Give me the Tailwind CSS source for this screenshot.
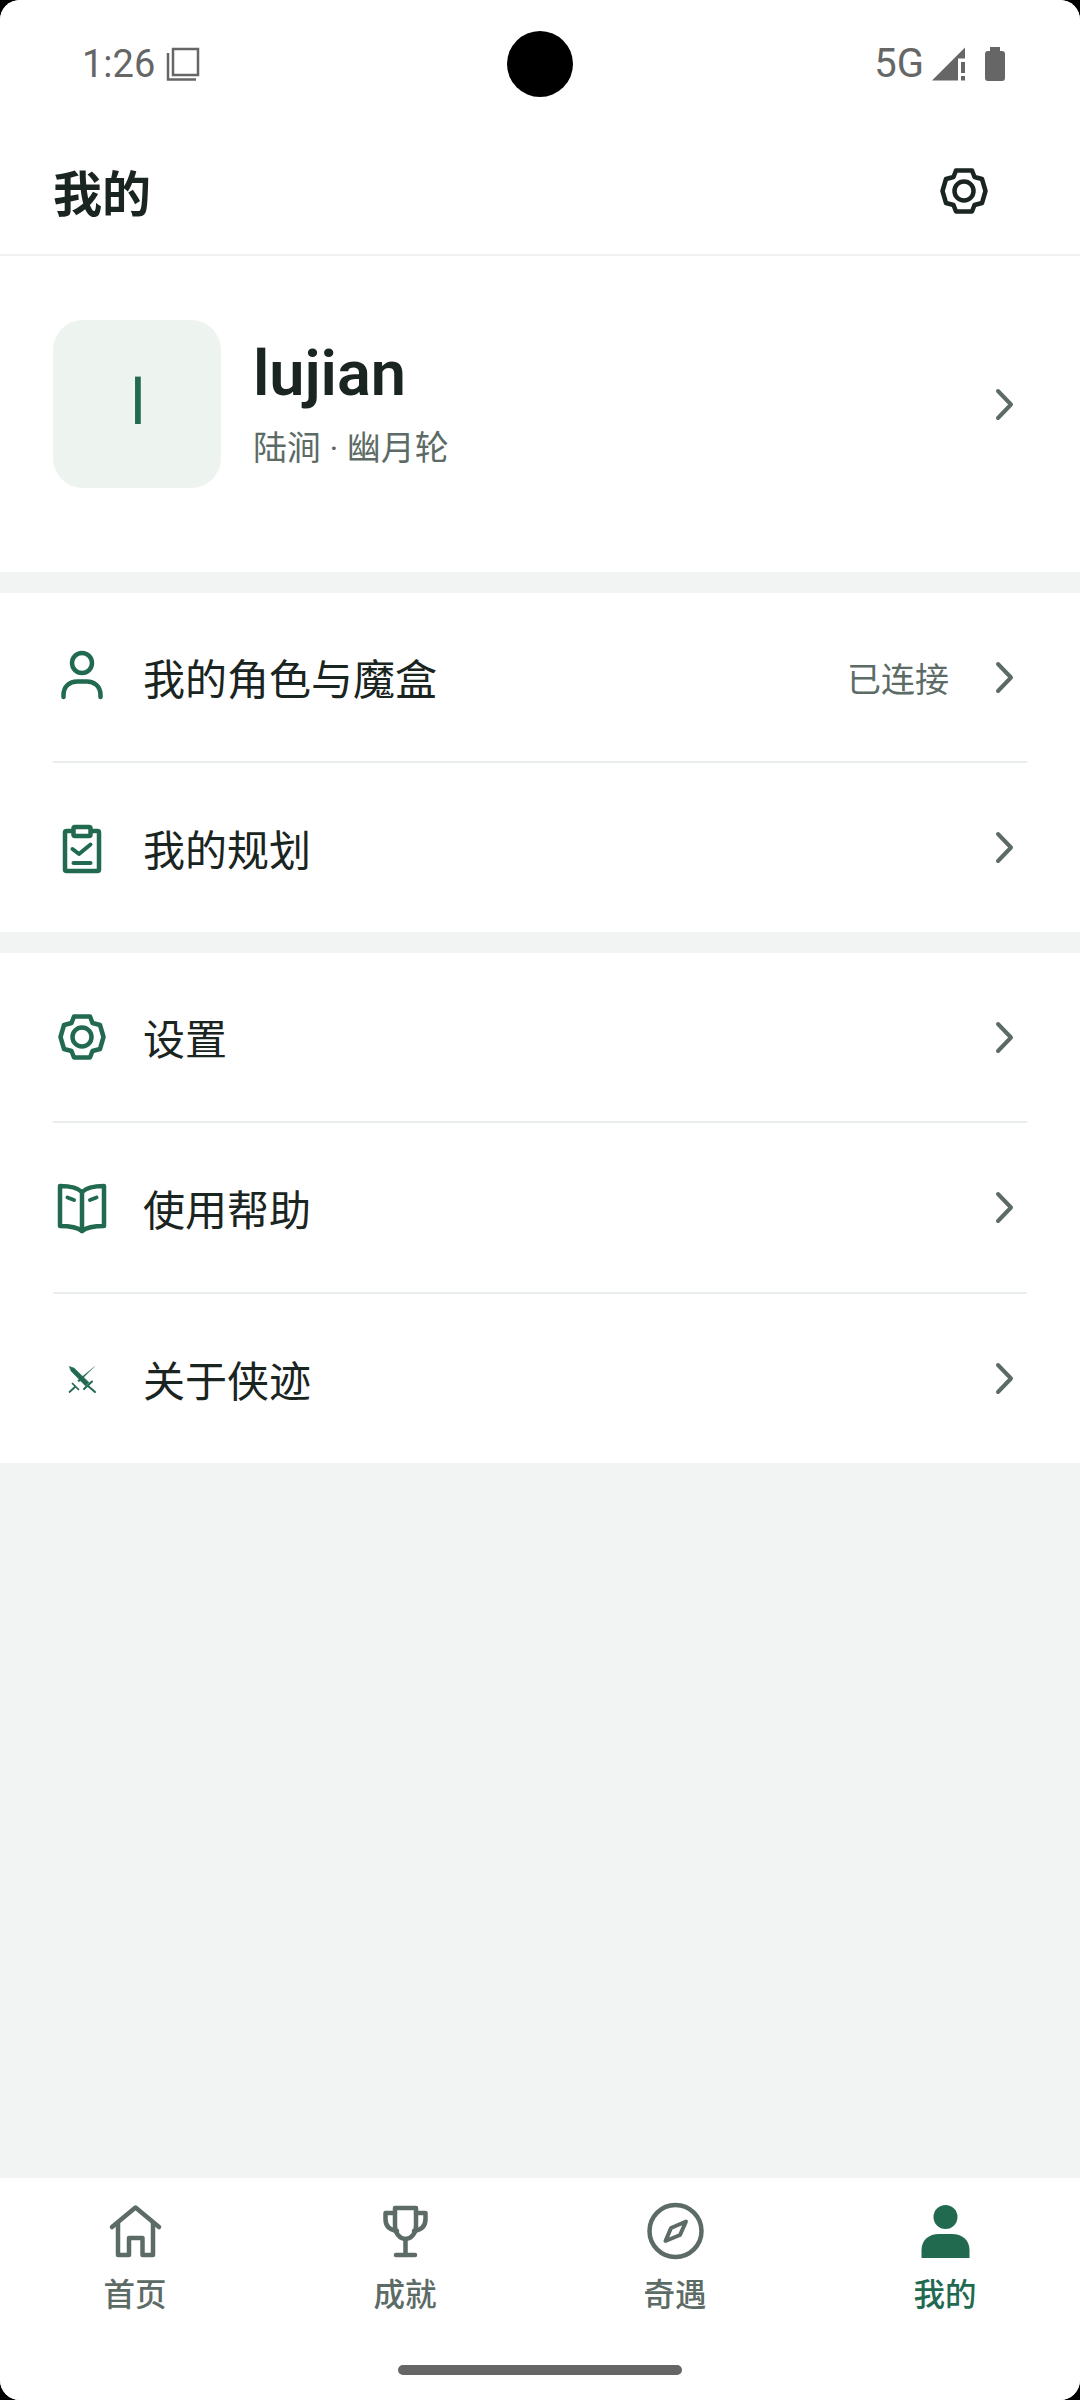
<!DOCTYPE html>
<html lang="zh-CN">
<head>
    <meta charset="UTF-8">
    <meta name="viewport" content="width=device-width, initial-scale=1.0">
    <title>我的</title>
    <script src="https://cdn.jsdelivr.net/npm/@tailwindcss/browser@4"></script>
</head>
<body class="bg-black">
<div class="w-[1080px] h-[2400px] bg-[#f2f4f3] rounded-[20px] overflow-hidden flex flex-col relative font-[Roboto,'Noto_Sans_CJK_SC',sans-serif] text-[#1a2421]">

    <!-- status bar -->
    <div class="h-[128px] bg-white flex items-center justify-between pl-[82px] pr-[75px] text-[#666666] shrink-0">
        <div class="flex items-center gap-[11px]">
            <span class="text-[38px] leading-none">1:26</span>
            <svg class="w-[34px] h-[34px]" viewBox="0 0 34 34" fill="none" stroke="#666666" stroke-width="2.5">
                <rect x="7" y="2" width="25" height="26"/>
                <path d="M2 6V32.5H30"/>
            </svg>
        </div>
        <div class="flex items-center">
            <span class="text-[40px] leading-none">5G</span>
            <svg class="w-[34px] h-[34px] ml-[8px]" viewBox="0 0 34 34" fill="#666666">
                <path d="M0 33.5L33 .5V11.5H26V33.5Z"/>
                <rect x="29" y="15" width="4" height="11"/>
                <rect x="29" y="29" width="4" height="4.5"/>
            </svg>
            <svg class="w-[20px] h-[34px] ml-[19px]" viewBox="0 0 20 34" fill="#666666">
                <path d="M5 0H15V4H17A3 3 0 0 1 20 7V31A3 3 0 0 1 17 34H3A3 3 0 0 1 0 31V7A3 3 0 0 1 3 4H5Z"/>
            </svg>
        </div>
    </div>
    <div class="absolute left-[507px] top-[31px] w-[66px] h-[66px] rounded-full bg-black"></div>

    <!-- header -->
    <div class="h-[128px] bg-white border-b-2 border-[#f0f2f1] flex items-center justify-between pl-[53px] pr-[53px] shrink-0">
        <h1 class="text-[49px] font-bold leading-none pt-[8px]">我的</h1>
        <div class="w-[126px] h-[126px] flex items-center justify-center">
            <svg class="w-[58px] h-[58px]" viewBox="0 0 58 58" fill="none" stroke="#1a2421" stroke-width="4.5" stroke-linejoin="round">
                <path d="M21 8.5H37L39.5 15L47 17L50.5 29L47 41L39.5 43L37 49.5H21L18.5 43L11 41L7.5 29L11 17L18.5 15Z"/>
                <circle cx="29" cy="29" r="9.5"/>
            </svg>
        </div>
    </div>

    <!-- profile -->
    <div class="bg-white flex items-center pl-[53px] pr-[53px] pt-[64px] pb-[84px] shrink-0">
        <div class="w-[168px] h-[168px] rounded-[30px] bg-[#edf3ef] flex items-center justify-center text-[63px] leading-none text-[#216a4f] shrink-0 pb-[3px] pl-[2px]">l</div>
        <div class="ml-[32px] flex-1">
            <div class="text-[63px] font-semibold leading-[74px]">lujian</div>
            <div class="text-[34px] leading-[48px] text-[#5c6b66] mt-[13px]">陆涧 · 幽月轮</div>
        </div>
        <svg class="w-[39px] h-[39px]" viewBox="0 0 39 39" fill="none" stroke="#5c6b66" stroke-width="4" stroke-linecap="round" stroke-linejoin="round">
            <path d="M10 6L23 19.5L10 33"/>
        </svg>
    </div>

    <!-- group 1 -->
    <div class="bg-white mt-[21px] px-[53px] shrink-0">
        <div class="h-[168px] flex items-center">
            <svg class="w-[58px] h-[58px] shrink-0" viewBox="0 0 58 58" fill="none" stroke="#216a4f" stroke-width="4.5" stroke-linecap="round">
                <circle cx="29" cy="15" r="10"/>
                <path d="M10.5 49V47C10.5 38 17 33.5 24 33.5H34C41 33.5 47.5 38 47.5 47V49"/>
            </svg>
            <span class="ml-[32px] text-[42px] leading-none flex-1 pt-[8px]">我的角色与魔盒</span>
            <span class="text-[34px] leading-none text-[#5c6b66] mr-[39px] pt-[6px]">已连接</span>
            <svg class="w-[39px] h-[39px]" viewBox="0 0 39 39" fill="none" stroke="#5c6b66" stroke-width="4" stroke-linecap="round" stroke-linejoin="round">
                <path d="M10 6L23 19.5L10 33"/>
            </svg>
        </div>
        <div class="h-[2px] bg-[#e9edeb]"></div>
        <div class="h-[169px] flex items-center">
            <svg class="w-[58px] h-[58px] shrink-0" viewBox="0 0 58 58" fill="none" stroke="#216a4f" stroke-width="4.5" stroke-linecap="round" stroke-linejoin="round">
                <rect x="12" y="12" width="34" height="40" rx="1.5"/>
                <rect x="20.5" y="8" width="17" height="9" rx="1.5" fill="#ffffff"/>
                <path d="M19.5 30L26 35L37.5 25.5" stroke-width="4"/>
                <path d="M20.5 44H37.5" stroke-width="4"/>
            </svg>
            <span class="ml-[32px] text-[42px] leading-none flex-1 pt-[8px]">我的规划</span>
            <svg class="w-[39px] h-[39px]" viewBox="0 0 39 39" fill="none" stroke="#5c6b66" stroke-width="4" stroke-linecap="round" stroke-linejoin="round">
                <path d="M10 6L23 19.5L10 33"/>
            </svg>
        </div>
    </div>

    <!-- group 2 -->
    <div class="bg-white mt-[21px] px-[53px] shrink-0">
        <div class="h-[168px] flex items-center">
            <svg class="w-[58px] h-[58px] shrink-0" viewBox="0 0 58 58" fill="none" stroke="#216a4f" stroke-width="4.5" stroke-linejoin="round">
                <path d="M21 8.5H37L39.5 15L47 17L50.5 29L47 41L39.5 43L37 49.5H21L18.5 43L11 41L7.5 29L11 17L18.5 15Z"/>
                <circle cx="29" cy="29" r="9.5"/>
            </svg>
            <span class="ml-[32px] text-[42px] leading-none flex-1 pt-[8px]">设置</span>
            <svg class="w-[39px] h-[39px]" viewBox="0 0 39 39" fill="none" stroke="#5c6b66" stroke-width="4" stroke-linecap="round" stroke-linejoin="round">
                <path d="M10 6L23 19.5L10 33"/>
            </svg>
        </div>
        <div class="h-[2px] bg-[#e9edeb]"></div>
        <div class="h-[169px] flex items-center">
            <svg class="w-[58px] h-[58px] shrink-0" viewBox="0 0 58 58" fill="none" stroke="#216a4f" stroke-width="4.5" stroke-linecap="round" stroke-linejoin="round">
                <path d="M29 13C25 9 18 7 7 7V47C16 47 24 48 29 52C34 48 42 47 51 47V7C40 7 33 9 29 13Z"/>
                <path d="M29 13V52"/>
                <path d="M14.5 18.5L21 21" stroke-width="4"/>
                <path d="M37 21L43.5 18.5" stroke-width="4"/>
            </svg>
            <span class="ml-[32px] text-[42px] leading-none flex-1 pt-[8px]">使用帮助</span>
            <svg class="w-[39px] h-[39px]" viewBox="0 0 39 39" fill="none" stroke="#5c6b66" stroke-width="4" stroke-linecap="round" stroke-linejoin="round">
                <path d="M10 6L23 19.5L10 33"/>
            </svg>
        </div>
        <div class="h-[2px] bg-[#e9edeb]"></div>
        <div class="h-[169px] flex items-center">
            <svg class="w-[58px] h-[58px] shrink-0" viewBox="0 0 58 58" fill="#216a4f" stroke="#216a4f" stroke-linecap="round">
                <path d="M16.5 16.5L21 18L36 32.5L32.5 36L18 21Z" stroke-width=".5"/>
                <path d="M41.5 16.5L24.5 30.5L26 32Z" stroke-width=".25"/>
                <path d="M31 39L39 31.5M34.5 35.5L42 42" fill="none" stroke-width="2"/>
                <path d="M19.5 33.5L25.5 39.5M22.5 36.5L16.5 42" fill="none" stroke-width="1.75"/>
            </svg>
            <span class="ml-[32px] text-[42px] leading-none flex-1 pt-[8px]">关于侠迹</span>
            <svg class="w-[39px] h-[39px]" viewBox="0 0 39 39" fill="none" stroke="#5c6b66" stroke-width="4" stroke-linecap="round" stroke-linejoin="round">
                <path d="M10 6L23 19.5L10 33"/>
            </svg>
        </div>
    </div>

    <div class="flex-1"></div>

    <!-- bottom nav -->
    <div class="h-[222px] bg-white pt-[22px] shrink-0 flex flex-col">
        <div class="grid grid-cols-4 text-[#5c6b66]">
            <div class="flex flex-col items-center">
                <svg class="w-[63px] h-[63px]" viewBox="0 0 63 63" fill="none" stroke="#5c6b66" stroke-width="4.5" stroke-linecap="round" stroke-linejoin="round">
                    <path d="M8 27L31.5 7.5L55 27"/>
                    <path d="M14 23V55H25V38H38.5V55H49V23"/>
                </svg>
                <span class="text-[31.5px] font-medium leading-[42px] mt-[12px]">首页</span>
            </div>
            <div class="flex flex-col items-center">
                <svg class="w-[63px] h-[63px]" viewBox="0 0 63 63" fill="none" stroke="#5c6b66" stroke-width="4.5" stroke-linecap="round" stroke-linejoin="round">
                    <path d="M21 8H42V26A10.5 13 0 0 1 21 26Z"/>
                    <path d="M21 13H11.5V19C11.5 26 16 30 23 31"/>
                    <path d="M42 13H51.5V19C51.5 26 47 30 40 31"/>
                    <path d="M31.5 39V55M22 55H41"/>
                </svg>
                <span class="text-[31.5px] font-medium leading-[42px] mt-[12px]">成就</span>
            </div>
            <div class="flex flex-col items-center">
                <svg class="w-[63px] h-[63px]" viewBox="0 0 63 63" fill="none" stroke="#5c6b66" stroke-width="4.5" stroke-linejoin="round">
                    <circle cx="31.5" cy="31" r="26"/>
                    <path d="M42 21.5L27 28L21.5 41L36 35Z" stroke-width="4"/>
                </svg>
                <span class="text-[31.5px] font-medium leading-[42px] mt-[12px]">奇遇</span>
            </div>
            <div class="flex flex-col items-center">
                <svg class="w-[63px] h-[63px]" viewBox="0 0 63 63" fill="#216a4f">
                    <circle cx="31.5" cy="17" r="12"/>
                    <path d="M7.5 58V50C7.5 40 15 34 25 34H38C48 34 55.5 40 55.5 50V58Z"/>
                </svg>
                <span class="text-[31.5px] font-medium leading-[42px] mt-[12px] text-[#216a4f]">我的</span>
            </div>
        </div>
        <div class="w-[284px] h-[10px] rounded-full bg-[#666666] mx-auto mt-[48px]"></div>
    </div>
</div>
</body>
</html>
